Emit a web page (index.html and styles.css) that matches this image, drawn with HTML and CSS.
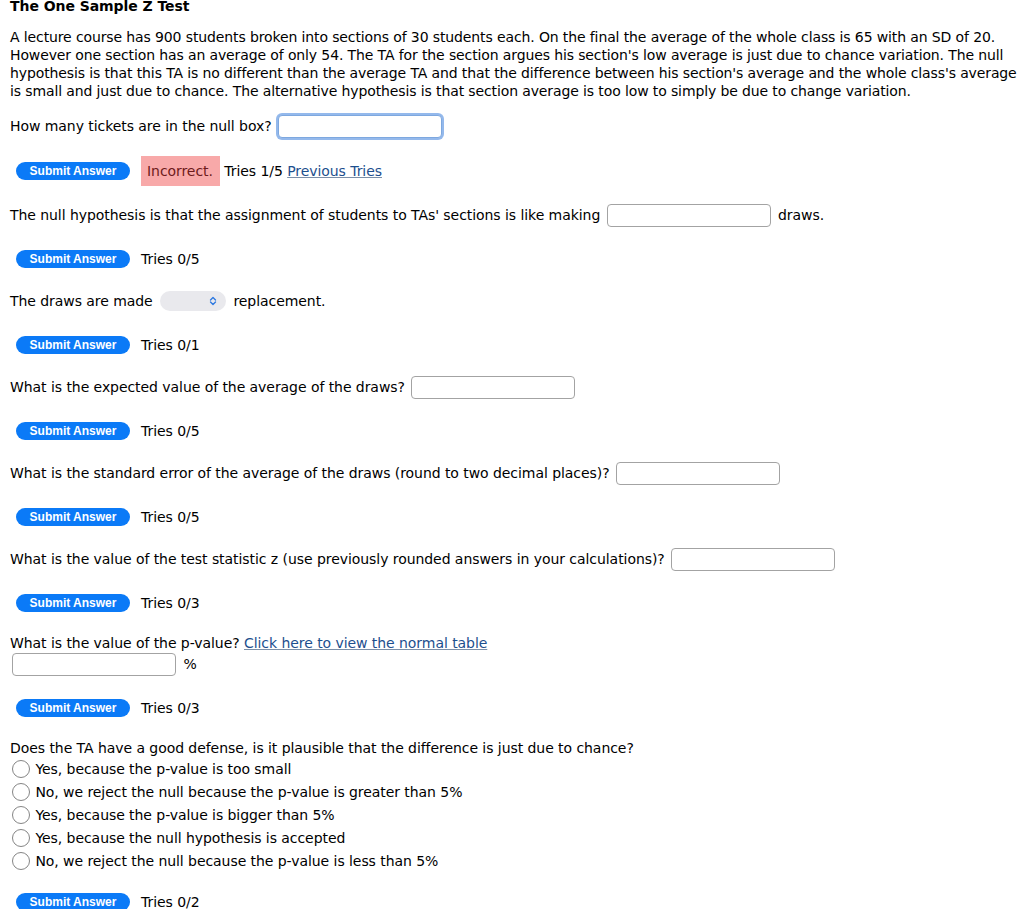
FILE: index.html
```html
<!DOCTYPE html>
<html lang="en">

<head>
    <meta charset="UTF-8">
    <meta name="viewport" content="width=device-width, initial-scale=1.0">
    <title>The One Sample Z Test</title>
    <link rel="stylesheet" href="styles.css">
</head>

<body>

    <h1 class="title">The One Sample Z Test</h1>

    <p class="intro">A lecture course has 900 students broken into sections of 30 students each. On the final the average of the whole class is 65 with an SD of 20. However one section has an average of only 54. The TA for the section argues his section's low average is just due to chance variation. The null hypothesis is that this TA is no different than the average TA and that the difference between his section's average and the whole class's average is small and just due to chance. The alternative hypothesis is that section average is too low to simply be due to change variation.</p>

    <!-- part 1 -->
    <div class="question">How many tickets are in the null box? <input type="text" class="answer focused"></div>
    <div class="submitRow graded">
        <button type="button" class="submitBtn">Submit Answer</button>
        <span class="incorrect">Incorrect.</span> Tries 1/5 <a href="#" class="prevLink">Previous Tries</a>
    </div>

    <!-- part 2 -->
    <div class="question">The null hypothesis is that the assignment of students to TAs' sections is like making <input type="text" class="answer"> draws.</div>
    <div class="submitRow">
        <button type="button" class="submitBtn">Submit Answer</button>
        <span class="tries">Tries 0/5</span>
    </div>

    <!-- part 3 -->
    <div class="question">The draws are made <span class="selectBox"><svg width="10" height="10" viewBox="0 0 10 10"><path d="M2.5 4 L5 1.5 L7.5 4 M2.5 6 L5 8.5 L7.5 6" fill="none" stroke="#2f7ae0" stroke-width="1.4" stroke-linecap="round" stroke-linejoin="round"/></svg></span> replacement.</div>
    <div class="submitRow">
        <button type="button" class="submitBtn">Submit Answer</button>
        <span class="tries">Tries 0/1</span>
    </div>

    <!-- part 4 -->
    <div class="question">What is the expected value of the average of the draws? <input type="text" class="answer"></div>
    <div class="submitRow">
        <button type="button" class="submitBtn">Submit Answer</button>
        <span class="tries">Tries 0/5</span>
    </div>

    <!-- part 5 -->
    <div class="question">What is the standard error of the average of the draws (round to two decimal places)? <input type="text" class="answer"></div>
    <div class="submitRow">
        <button type="button" class="submitBtn">Submit Answer</button>
        <span class="tries">Tries 0/5</span>
    </div>

    <!-- part 6 -->
    <div class="question">What is the value of the test statistic z (use previously rounded answers in your calculations)? <input type="text" class="answer"></div>
    <div class="submitRow">
        <button type="button" class="submitBtn">Submit Answer</button>
        <span class="tries">Tries 0/3</span>
    </div>

    <!-- part 7 -->
    <div class="pvalue">
        <div class="pvalueText">What is the value of the p-value? <a href="#" class="tableLink">Click here to view the normal table</a></div>
        <div class="pvalueInput"><input type="text" class="answer"> %</div>
    </div>
    <div class="submitRow">
        <button type="button" class="submitBtn">Submit Answer</button>
        <span class="tries">Tries 0/3</span>
    </div>

    <!-- part 8 -->
    <div class="choices">
        <div class="choicesText">Does the TA have a good defense, is it plausible that the difference is just due to chance?</div>
        <label class="choice"><input type="radio" name="defense"> Yes, because the p-value is too small</label>
        <label class="choice"><input type="radio" name="defense"> No, we reject the null because the p-value is greater than 5%</label>
        <label class="choice"><input type="radio" name="defense"> Yes, because the p-value is bigger than 5%</label>
        <label class="choice"><input type="radio" name="defense"> Yes, because the null hypothesis is accepted</label>
        <label class="choice"><input type="radio" name="defense"> No, we reject the null because the p-value is less than 5%</label>
    </div>
    <div class="submitRow">
        <button type="button" class="submitBtn">Submit Answer</button>
        <span class="tries">Tries 0/2</span>
    </div>

</body>
</html>
```

FILE: styles.css
```css
body {
    font-family: Verdana, 'DejaVu Sans', sans-serif;
    font-size: 14px;
    line-height: 18px;
    letter-spacing: -0.06px;
    margin: 0;
    padding: 0 0 0 10px;
    color: #000;
    background-color: #fff;
}

.title {
    font-size: 14px;
    font-weight: bold;
    line-height: 18px;
    margin: -3px 0 13px 0;
}

.intro {
    margin: 0 0 14px 0;
    letter-spacing: -0.12px;
}

.question {
    display: flex;
    align-items: center;
    height: 24px;
    white-space: pre;
    margin-bottom: 17px;
}

.answer {
    box-sizing: border-box;
    width: 164px;
    height: 23px;
    margin: 0 3px 0 2px;
    border: 1px solid #a3a3a3;
    border-radius: 4px;
    background-color: #fff;
    font: inherit;
}

.answer.focused {
    border-color: #7ea8df;
    box-shadow: 0 0 0 2px #94b9ec;
}

.selectBox {
    display: inline-flex;
    align-items: center;
    justify-content: flex-end;
    box-sizing: border-box;
    width: 66px;
    height: 20px;
    margin: 0 3px 0 3px;
    padding-right: 8px;
    border-radius: 10px;
    background-color: #e9e9ed;
}

.submitRow {
    display: flex;
    align-items: center;
    height: 30px;
    white-space: pre;
    margin-bottom: 15px;
}

.submitRow.graded {
    margin-top: 18px;
    margin-bottom: 17px;
}

.submitBtn {
    width: 114px;
    height: 18px;
    margin: 0 11px 0 6px;
    padding: 0;
    border: none;
    border-radius: 9px;
    background-color: #0b7af7;
    color: #fff;
    font-family: Arial, 'Liberation Sans', sans-serif;
    font-size: 12px;
    font-weight: bold;
    letter-spacing: 0;
    cursor: pointer;
}

.incorrect {
    display: inline-flex;
    align-items: center;
    height: 30px;
    padding: 0 7px 0 6px;
    background-color: #f8a9a9;
    color: #6e1b1b;
}

.prevLink,
.tableLink {
    color: #1d4f8e;
    text-decoration: underline;
    text-decoration-color: #7b8fa8;
}

.pvalue {
    padding-top: 1px;
    margin-bottom: 17px;
}

.pvalueText {
    height: 18px;
}

.pvalueInput {
    display: flex;
    align-items: center;
    height: 24px;
    white-space: pre;
}

.choices {
    padding-top: 1px;
    margin-bottom: 15px;
}

.choices .choicesText {
    height: 18px;
}

.choice {
    display: flex;
    align-items: center;
    height: 23px;
    white-space: pre;
}

.choice input {
    appearance: none;
    box-sizing: border-box;
    width: 18px;
    height: 18px;
    margin: 0 1px 0 2px;
    border: 1.5px solid #858585;
    border-radius: 50%;
    background-color: #fff;
}
```
